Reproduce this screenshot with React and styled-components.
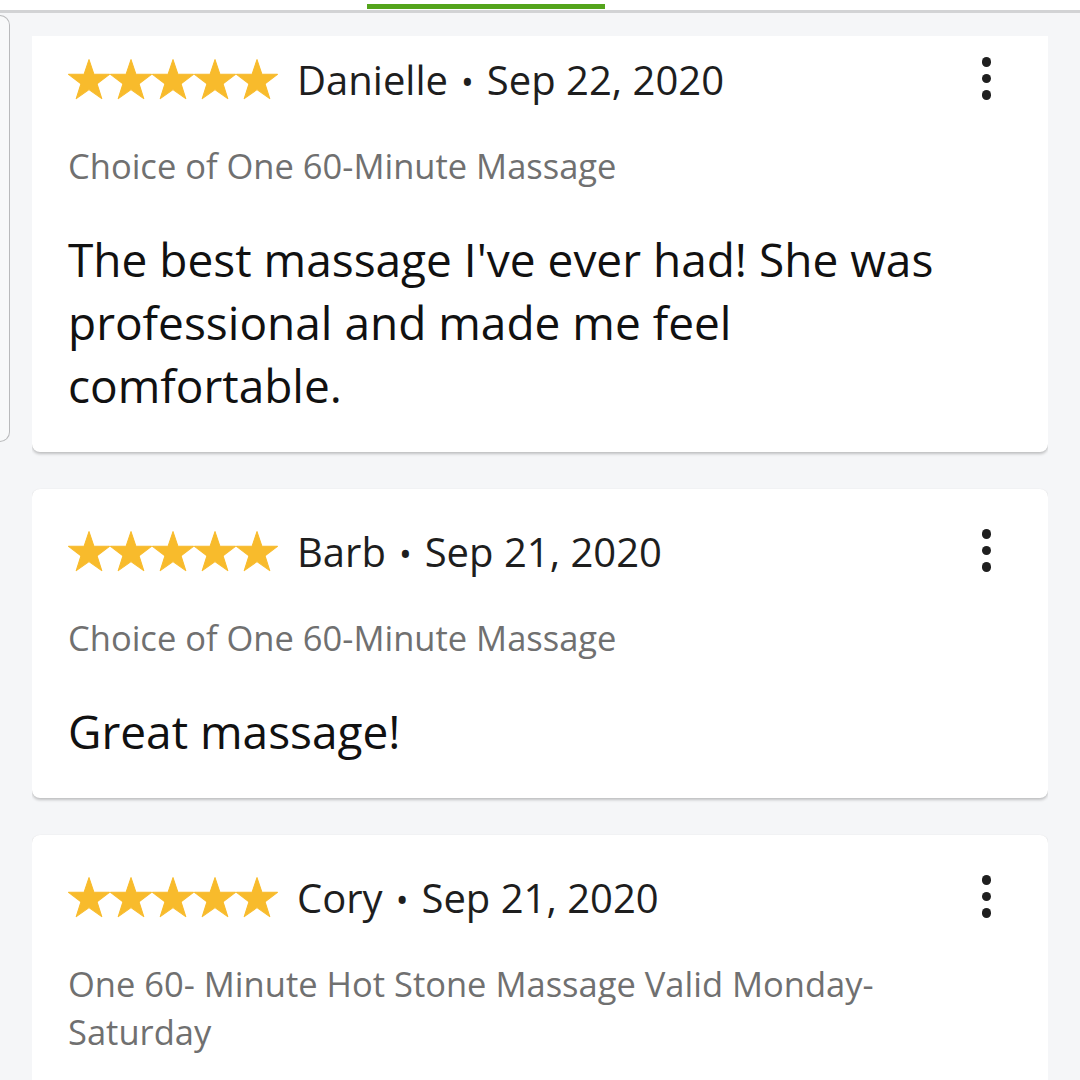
import React from "react";
import styled, { createGlobalStyle } from "styled-components";

const GlobalStyle = createGlobalStyle`
  html, body {
    margin: 0;
    padding: 0;
    background: #f5f6f8;
    font-family: "Open Sans", "Noto Sans", sans-serif;
  }
`;

const Page = styled.div`
  width: 1080px;
  height: 1080px;
  overflow: hidden;
  background: #f5f6f8;
`;

const Header = styled.div`
  height: 10px;
  background: #fff;
  border-bottom: 3px solid #d2d3d5;
  display: flex;
  padding-left: 367px;
`;

const TabIndicator = styled.div`
  width: 238px;
  height: 5px;
  margin-top: 4px;
  background: #54a41c;
`;

const Main = styled.div`
  display: flex;
  align-items: flex-start;
`;

const SideRail = styled.div`
  width: 9px;
  height: 425px;
  margin-top: 2px;
  background: #f8f9fa;
  border: 1px solid #b9babc;
  border-left: none;
  border-radius: 0 10px 10px 0;
  flex-shrink: 0;
`;

const Viewport = styled.div`
  margin-top: 23px;
  margin-left: 22px;
  width: 1016px;
  height: 1044px;
  overflow: hidden;
`;

const List = styled.div`
  margin-top: -19px;
  display: flex;
  flex-direction: column;
  gap: 37px;
`;

const Card = styled.div`
  position: relative;
  background: #fff;
  border-radius: 8px;
  box-shadow: 0 2px 3px rgba(0, 0, 0, 0.22), 0 0 1px rgba(0, 0, 0, 0.08);
  padding: 39px 70px 35px 36px;
`;

const HeadRow = styled.div`
  display: flex;
  align-items: center;
  height: 46px;
`;

const Stars = styled.div`
  display: flex;
  margin-right: 19px;
`;

const Name = styled.span`
  font-size: 40px;
  color: #1e1e1e;
  white-space: nowrap;
`;

const Dot = styled.span`
  margin: 0 13px;
  font-size: 34px;
`;

const Menu = styled.div`
  position: absolute;
  top: 40px;
  right: 57px;
  display: flex;
  flex-direction: column;
  gap: 7px;
`;

const MenuDot = styled.span`
  width: 9.5px;
  height: 9.5px;
  border-radius: 50%;
  background: #1f1f1f;
`;

const Deal = styled.div`
  margin-top: 40px;
  font-size: 34.5px;
  line-height: 48px;
  color: #707070;
`;

const Body = styled.div`
  margin-top: 38px;
  font-size: 46px;
  line-height: 63px;
  color: #111;
`;

const Star = () => (
  <svg width="42" height="42" viewBox="0 0 24 24">
    <path
      fill="#f8bb2c"
      stroke="#f8bb2c"
      strokeWidth="0.6"
      strokeLinejoin="round"
      d="M12 0.9L14.83 9.32 23.7 9.32 16.58 14.71 19.3 23.2 12 18.04 4.7 23.2 7.42 14.71 0.3 9.32 9.17 9.32Z"
    />
  </svg>
);

const reviews = [
  {
    name: "Danielle",
    date: "Sep 22, 2020",
    deal: "Choice of One 60-Minute Massage",
    text: "The best massage I've ever had! She was professional and made me feel comfortable.",
  },
  {
    name: "Barb",
    date: "Sep 21, 2020",
    deal: "Choice of One 60-Minute Massage",
    text: "Great massage!",
  },
  {
    name: "Cory",
    date: "Sep 21, 2020",
    deal: "One 60- Minute Hot Stone Massage Valid Monday-Saturday",
    text: "",
  },
];

const Review = ({ review }) => (
  <Card>
    <HeadRow>
      <Stars>
        {[0, 1, 2, 3, 4].map((i) => (
          <Star key={i} />
        ))}
      </Stars>
      <Name>
        {review.name}
        <Dot>•</Dot>
        {review.date}
      </Name>
    </HeadRow>
    <Menu>
      <MenuDot />
      <MenuDot />
      <MenuDot />
    </Menu>
    <Deal>{review.deal}</Deal>
    {review.text && <Body>{review.text}</Body>}
  </Card>
);

const App = () => {
  return (
    <Page>
      <GlobalStyle />
      <Header>
        <TabIndicator />
      </Header>
      <Main>
        <SideRail />
        <Viewport>
          <List>
            {reviews.map((r) => (
              <Review key={r.name} review={r} />
            ))}
          </List>
        </Viewport>
      </Main>
    </Page>
  );
};

export default App;
